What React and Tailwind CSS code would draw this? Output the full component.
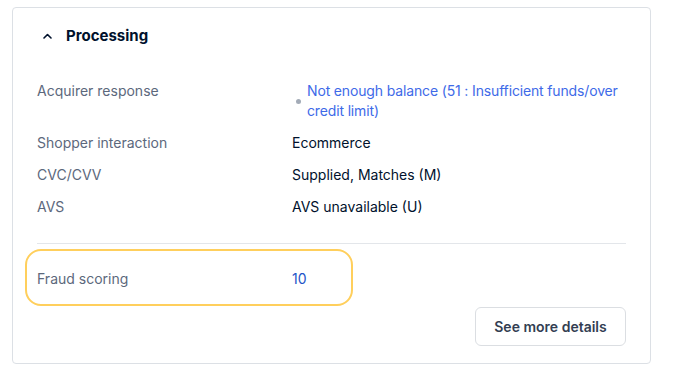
import React from "react";

// Processing details card
const rows = [
    { label: "Shopper interaction", value: "Ecommerce" },
    { label: "CVC/CVV", value: "Supplied, Matches (M)" },
    { label: "AVS", value: "AVS unavailable (U)" },
];

const App = () => {
    return (
        <div className="min-h-screen bg-white pt-[7px] pl-3 font-['Inter',sans-serif] text-[14px] leading-5">
            <div className="w-[639px] h-[357px] border border-[#dce0e5] rounded-[4px] px-6 pt-4 pb-[17px] flex flex-col">
                <div className="flex items-center gap-[14px] pl-[6px] h-6">
                    <svg width="9" height="6" viewBox="0 0 9 6" fill="none">
                        <path d="M1 5L4.5 1.5L8 5" stroke="#00112c" strokeWidth="1.6" strokeLinecap="round" strokeLinejoin="round" />
                    </svg>
                    <span className="text-[15px] font-bold text-[#00112c]">Processing</span>
                </div>

                <div className="mt-[33px] flex flex-col gap-3">
                    <div className="flex">
                        <div className="w-[255px] text-[#5c687c]">Acquirer response</div>
                        <div className="flex items-center gap-[6px] pl-1">
                            <span className="w-[5px] h-[5px] rounded-full bg-[#a3abb7] shrink-0"></span>
                            <span className="text-[#3e6ae8] w-[318px] tracking-[-0.15px]">Not enough balance (51 : Insufficient funds/over credit limit)</span>
                        </div>
                    </div>
                    {rows.map((r) => (
                        <div key={r.label} className="flex">
                            <div className="w-[255px] text-[#5c687c]">{r.label}</div>
                            <div className="text-[#00112c]">{r.value}</div>
                        </div>
                    ))}
                </div>

                <div className="mt-[26px] border-t border-[#e3e6ea]"></div>

                <div className="relative mt-[25px] flex">
                    <div className="w-[255px] text-[#5c687c]">Fraud scoring</div>
                    <div className="text-[#2453c7]">10</div>
                    <div className="absolute left-[-12px] top-[-20px] w-[328px] h-[57px] rounded-[16px] border-[2.5px] border-[#ffcf5c]"></div>
                </div>

                <div className="mt-auto flex justify-end">
                    <button className="h-[39px] w-[151px] border border-[#dbdee2] rounded-[6px] font-semibold text-[#333e52] bg-white">
                        See more details
                    </button>
                </div>
            </div>
        </div>
    );
};

export default App;
